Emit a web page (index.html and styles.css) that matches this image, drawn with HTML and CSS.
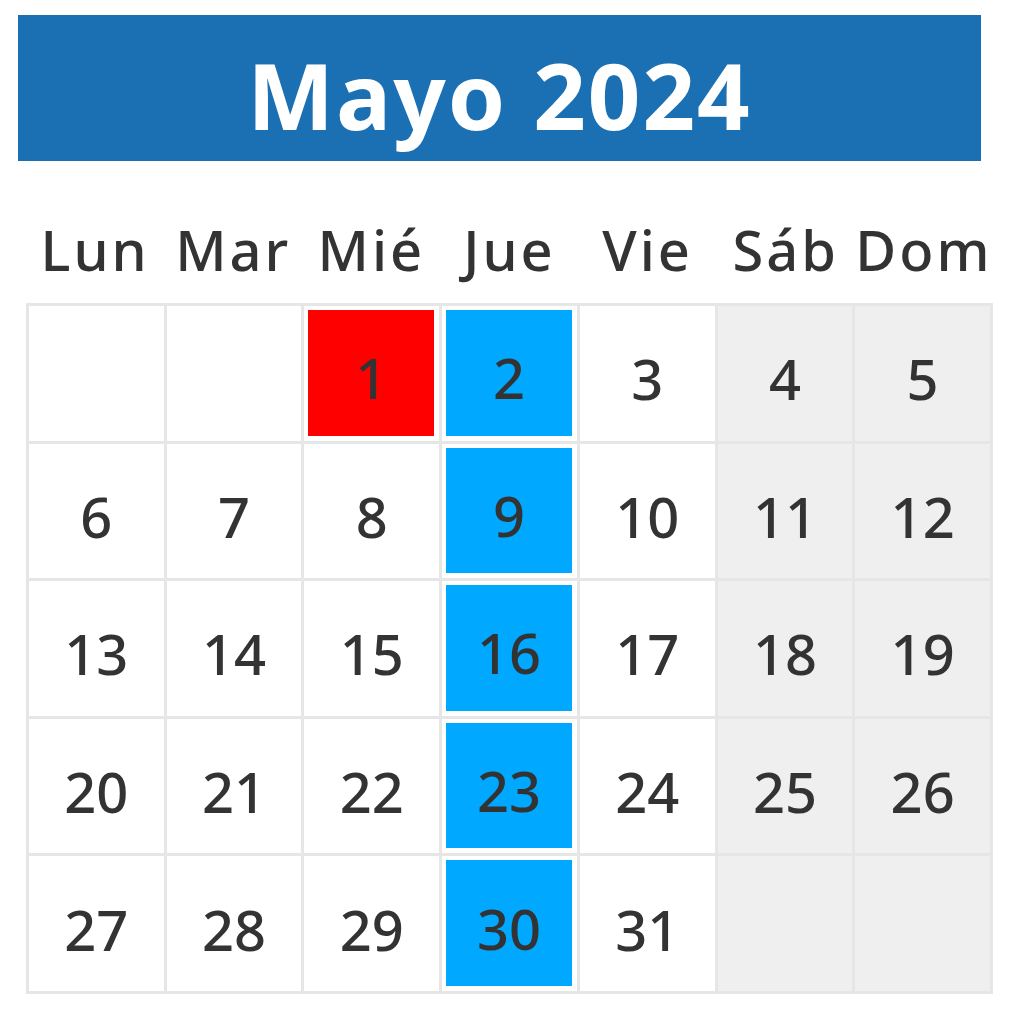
FILE: index.html
```html
<!DOCTYPE html>
<html lang="es">
<head>
<meta charset="utf-8">
<title>Mayo 2024</title>
<link rel="stylesheet" href="styles.css">
</head>
<body>
<div class="page">
  <header class="title-bar"><h1 class="title">Mayo 2024</h1></header>
  <div class="weekdays">
    <div class="wd">Lun</div><div class="wd">Mar</div><div class="wd">Mié</div><div class="wd">Jue</div><div class="wd">Vie</div><div class="wd">Sáb</div><div class="wd">Dom</div>
  </div>
  <div class="grid">
    <div class="cell"></div>
    <div class="cell"></div>
    <div class="cell"><span class="mark red">1</span></div>
    <div class="cell"><span class="mark blue">2</span></div>
    <div class="cell">3</div>
    <div class="cell we">4</div>
    <div class="cell we">5</div>

    <div class="cell">6</div>
    <div class="cell">7</div>
    <div class="cell">8</div>
    <div class="cell"><span class="mark blue">9</span></div>
    <div class="cell">10</div>
    <div class="cell we">11</div>
    <div class="cell we">12</div>

    <div class="cell">13</div>
    <div class="cell">14</div>
    <div class="cell">15</div>
    <div class="cell"><span class="mark blue">16</span></div>
    <div class="cell">17</div>
    <div class="cell we">18</div>
    <div class="cell we">19</div>

    <div class="cell">20</div>
    <div class="cell">21</div>
    <div class="cell">22</div>
    <div class="cell"><span class="mark blue">23</span></div>
    <div class="cell">24</div>
    <div class="cell we">25</div>
    <div class="cell we">26</div>

    <div class="cell">27</div>
    <div class="cell">28</div>
    <div class="cell">29</div>
    <div class="cell"><span class="mark blue">30</span></div>
    <div class="cell">31</div>
    <div class="cell we"></div>
    <div class="cell we"></div>
  </div>
</div>
</body>
</html>
```
FILE: styles.css
```css
* { box-sizing: border-box; }
html, body { margin: 0; padding: 0; background: #ffffff; }
body {
  font-family: "Noto Sans", "Open Sans", sans-serif;
  color: #333333;
  width: 1019px;
  height: 1024px;
  overflow: hidden;
}
.page {
  padding-top: 15px;
}
.title-bar {
  margin: 0 38px 0 18px;
  height: 146px;
  background: #1b70b4;
  display: flex;
  align-items: center;
  justify-content: center;
}
.title {
  margin: 0;
  padding-top: 14px;
  color: #ffffff;
  font-size: 92px;
  font-weight: 700;
  letter-spacing: 2px;
  line-height: 1;
}
.weekdays {
  margin: 0 26px 0 26px;
  width: 967px;
  display: grid;
  grid-template-columns: repeat(7, 1fr);
  height: 142px;
  align-items: end;
  padding-bottom: 26px;
}
.wd {
  text-align: center;
  font-size: 56px;
  font-weight: 500;
  letter-spacing: 3px;
  line-height: 1;
  white-space: nowrap;
}
.grid {
  margin-left: 26px;
  width: 967px;
  height: 691px;
  display: grid;
  grid-template-columns: repeat(7, 1fr);
  grid-template-rows: repeat(5, 1fr);
  gap: 3px;
  padding: 3px;
  background: #e6e6e6;
}
.cell {
  background: #ffffff;
  display: flex;
  align-items: center;
  justify-content: center;
  font-size: 56px;
  font-weight: 500;
  line-height: 1;
  padding-top: 10px;
}
.cell.we { background: #efefef; }
.cell:has(.mark) { padding: 4px 5px 5px 4px; }
.mark {
  width: 100%;
  height: 100%;
  display: flex;
  align-items: center;
  justify-content: center;
  padding-top: 9px;
}
.mark.red { background: #ff0000; }
.mark.blue { background: #00a8ff; }
```
